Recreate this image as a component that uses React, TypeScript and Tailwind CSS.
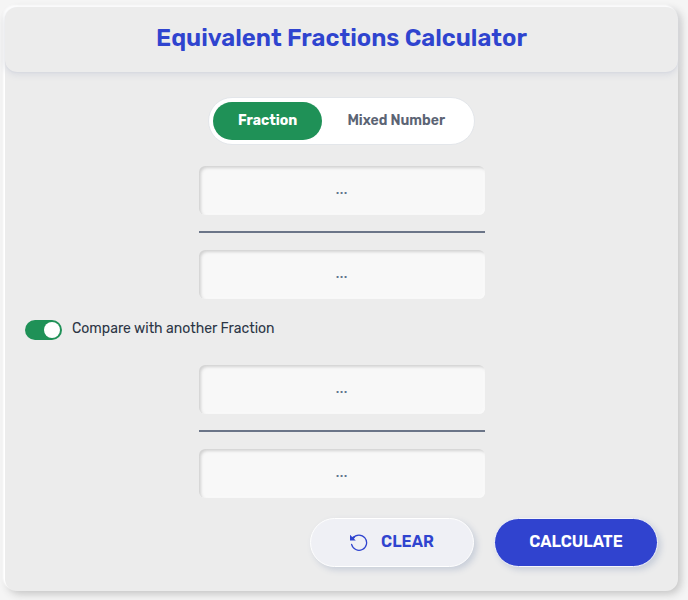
// Equivalent fractions calculator: mode tabs, fraction fields, optional second fraction.

import { useState } from "react";

const MODES = ["Fraction", "Mixed Number"];

function NumberField({ label }: { label: string }) {
  return (
    <input
      type="text"
      inputMode="numeric"
      aria-label={label}
      placeholder="..."
      className="h-[49px] w-full rounded-md bg-[#f8f8f8] px-3 pb-1 text-center text-base text-slate-800 shadow-[inset_2px_2px_3px_#d2d2d2,inset_-1px_-1px_2px_#fafafa] outline-none placeholder:text-slate-500"
    />
  );
}

function FractionInput({ name }: { name: string }) {
  return (
    <div className="mx-auto flex w-full max-w-[286px] flex-col">
      <NumberField label={`${name} numerator`} />
      <div className="mt-4 mb-[17px] h-0.5 bg-[#6b7588]" />
      <NumberField label={`${name} denominator`} />
    </div>
  );
}

function ResetIcon() {
  return (
    <svg
      viewBox="0 0 18 18"
      className="size-[18px]"
      fill="none"
      stroke="currentColor"
      strokeWidth="1.3"
      aria-hidden="true"
    >
      <path d="M1.6 11.4A7.6 7.6 0 1 0 3 5" strokeLinecap="round" />
      <path d="M0 1.8v5.8h5.8L3.9 5.7 5 4.6 3.6 3.2 2.2 4z" fill="currentColor" stroke="none" />
    </svg>
  );
}

export default function App() {
  const [mode, setMode] = useState("Fraction");
  const [compare, setCompare] = useState(true);

  return (
    <div className="min-h-screen bg-[#f5f5f5] pt-[7px] pr-[10px] pb-[9px] pl-[5px] font-['Rubik','Roboto',sans-serif]">
      <main className="rounded-xl bg-[#ececec] shadow-[-2px_-2px_2px_#ffffff,-1px_-1px_1px_#ffffff,3px_3px_8px_#c4c4c4]">
        <header className="flex h-[65px] items-center justify-center rounded-xl pb-1 shadow-[0_3px_6px_#d9dbe1,0_1px_1px_#d9dbe1]">
          <h1 className="text-2xl font-semibold text-[#2f44cf]">
            Equivalent Fractions Calculator
          </h1>
        </header>

        <form
          className="px-5 pt-[25px] pb-6"
          onSubmit={(e) => e.preventDefault()}
          onReset={() => setCompare(true)}
        >
          <div className="mx-auto flex h-12 w-fit rounded-full border border-[#e3e6ea] bg-white p-1">
            {MODES.map((m) => (
              <button
                key={m}
                type="button"
                aria-pressed={mode === m}
                onClick={() => setMode(m)}
                className={
                  mode === m
                    ? "rounded-full bg-[#1f9157] px-[25px] text-sm font-bold text-white"
                    : "rounded-full px-[25px] text-sm font-semibold text-[#5b6474]"
                }
              >
                {m}
              </button>
            ))}
          </div>

          <div className="mt-[21px]">
            <FractionInput name="First" />
          </div>

          <label className="mt-[19px] flex h-6 w-fit cursor-pointer items-center gap-[10px]">
            <input
              type="checkbox"
              role="switch"
              checked={compare}
              onChange={(e) => setCompare(e.target.checked)}
              className="h-5 w-[37px] appearance-none rounded-full bg-slate-400 p-0.5 before:block before:size-4 before:rounded-full before:bg-white checked:bg-[#1f9157] checked:before:ml-auto"
            />
            <span className="pb-0.5 text-sm text-[#2b3545]">
              Compare with another Fraction
            </span>
          </label>

          {compare && (
            <div className="mt-[23px]">
              <FractionInput name="Second" />
            </div>
          )}

          <div className="mt-5 flex justify-end gap-5">
            <button
              type="reset"
              className="flex h-[49px] w-[164px] items-center justify-center gap-[13px] rounded-full border border-white bg-[#eff0f5] pb-0.5 text-base font-semibold text-[#2f44cf] shadow-[3px_3px_6px_#c8ced9]"
            >
              <ResetIcon />
              CLEAR
            </button>
            <button
              type="submit"
              className="h-[49px] w-[164px] rounded-full border border-[#f4f5fa] bg-[#3043cf] pb-0.5 text-base font-semibold text-white shadow-[3px_3px_6px_#c8ced9]"
            >
              CALCULATE
            </button>
          </div>
        </form>
      </main>
    </div>
  );
}
